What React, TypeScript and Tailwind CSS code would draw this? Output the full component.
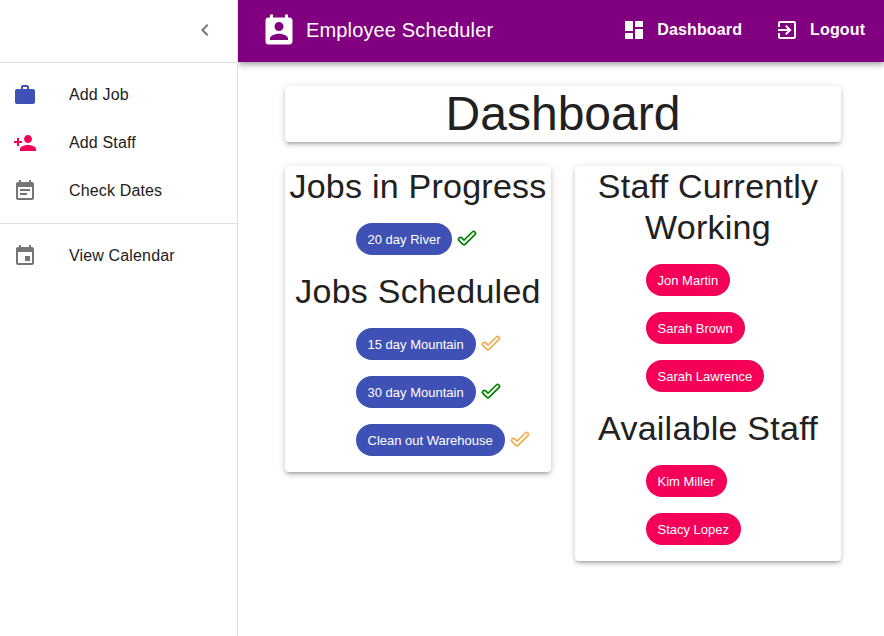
import React from "react";
import {
  MdChevronLeft,
  MdDashboard,
  MdEvent,
  MdEventNote,
  MdExitToApp,
  MdPermContactCalendar,
  MdPersonAdd,
  MdWork,
} from "react-icons/md";

type Job = { name: string; ready: boolean };

const inProgress: Job[] = [{ name: "20 day River", ready: true }];
const scheduled: Job[] = [
  { name: "15 day Mountain", ready: false },
  { name: "30 day Mountain", ready: true },
  { name: "Clean out Warehouse", ready: false },
];
const working = ["Jon Martin", "Sarah Brown", "Sarah Lawrence"];
const available = ["Kim Miller", "Stacy Lopez"];

const paper =
  "rounded bg-white shadow-[0px_3px_3px_-2px_rgba(0,0,0,0.2),0px_3px_4px_0px_rgba(0,0,0,0.14),0px_1px_8px_0px_rgba(0,0,0,0.12)]";

function NavItem({ icon, label }: { icon: React.ReactNode; label: string }) {
  return (
    <li className="flex h-12 items-center pl-[13px]">
      <span className="w-14 shrink-0">{icon}</span>
      <span className="pb-px text-base tracking-[0.15px]">{label}</span>
    </li>
  );
}

function Heading({ children }: { children: React.ReactNode }) {
  return (
    <h2 className="text-center text-[34px] leading-[41px] tracking-[0.25px]">{children}</h2>
  );
}

function Chip({ label, color }: { label: string; color: string }) {
  return (
    <span
      className={`flex h-8 items-center whitespace-nowrap rounded-full pl-[11.5px] pr-3 pt-0.5 text-[13px] font-medium text-white ${color}`}
    >
      {label}
    </span>
  );
}

// Hollow tick: a wide coloured stroke with a narrower white one on top.
function Tick({ className }: { className: string }) {
  const d = "M3.4 9.3 7 12.8 16.6 3.3";
  return (
    <svg
      viewBox="0 0 20 16"
      fill="none"
      strokeLinecap="round"
      strokeLinejoin="round"
      className={`h-4 w-5 ${className}`}
    >
      <path d={d} stroke="currentColor" strokeWidth="5.4" />
      <path d={d} stroke="#fff" strokeWidth="2" />
    </svg>
  );
}

function JobList({ jobs }: { jobs: Job[] }) {
  return (
    <ul className="flex flex-col gap-4 py-4 pl-[71px]">
      {jobs.map((job) => (
        <li key={job.name} className="flex">
          <Chip label={job.name} color="bg-[#3f51b5]" />
          <Tick
            className={`ml-[5px] mt-[7px] ${job.ready ? "text-[#008000]" : "text-[#f0ad4e]"}`}
          />
        </li>
      ))}
    </ul>
  );
}

function StaffList({ names }: { names: string[] }) {
  return (
    <ul className="flex flex-col items-start gap-4 py-4 pl-[71px]">
      {names.map((name) => (
        <li key={name}>
          <Chip label={name} color="bg-[#f50057]" />
        </li>
      ))}
    </ul>
  );
}

export default function App() {
  return (
    <div className="flex h-[636px] w-[884px] overflow-hidden bg-white font-['Liberation_Sans',Arial,sans-serif] text-[#212121]">
      <aside className="w-[238px] shrink-0 border-r border-[#e0e0e0] bg-white">
        <div className="flex h-[63px] items-center justify-end border-b border-[#e0e0e0] pb-0.5 pr-5">
          <MdChevronLeft className="size-6 text-[#757575]" />
        </div>
        <ul className="border-b border-[#e0e0e0] py-2">
          <NavItem icon={<MdWork className="size-6 text-[#3f51b5]" />} label="Add Job" />
          <NavItem icon={<MdPersonAdd className="size-6 text-[#f50057]" />} label="Add Staff" />
          <NavItem icon={<MdEventNote className="size-6 text-[#757575]" />} label="Check Dates" />
        </ul>
        <ul className="py-2">
          <NavItem icon={<MdEvent className="size-6 text-[#757575]" />} label="View Calendar" />
        </ul>
      </aside>

      <div className="flex grow flex-col">
        <header className="flex h-[62px] items-center bg-[#800080] pb-0.5 pl-[22.5px] pr-[18.8px] text-white [clip-path:inset(0_0_-16px_0)] shadow-[0px_2px_4px_-1px_rgba(0,0,0,0.2),0px_4px_5px_0px_rgba(0,0,0,0.14),0px_1px_10px_0px_rgba(0,0,0,0.12)]">
          <MdPermContactCalendar className="mt-px size-9" />
          <h1 className="ml-[9.5px] grow text-xl font-medium tracking-[0.15px]">
            Employee Scheduler
          </h1>
          <a className="flex items-center">
            <MdDashboard className="size-6" />
            <span className="ml-[11.5px] text-base font-bold tracking-[0.15px]">Dashboard</span>
          </a>
          <a className="ml-[32.5px] flex items-center">
            <MdExitToApp className="size-6" />
            <span className="ml-[11.5px] text-base font-bold tracking-[0.15px]">Logout</span>
          </a>
        </header>

        <main className="grid grid-cols-2 items-start gap-6 pl-[47px] pr-[43px] pt-6">
          <section className={`col-span-2 ${paper}`}>
            <h1 className="text-center text-5xl leading-[56px]">Dashboard</h1>
          </section>
          <section className={paper}>
            <Heading>Jobs in Progress</Heading>
            <JobList jobs={inProgress} />
            <Heading>Jobs Scheduled</Heading>
            <JobList jobs={scheduled} />
          </section>
          <section className={paper}>
            <Heading>Staff Currently Working</Heading>
            <StaffList names={working} />
            <Heading>Available Staff</Heading>
            <StaffList names={available} />
          </section>
        </main>
      </div>
    </div>
  );
}
